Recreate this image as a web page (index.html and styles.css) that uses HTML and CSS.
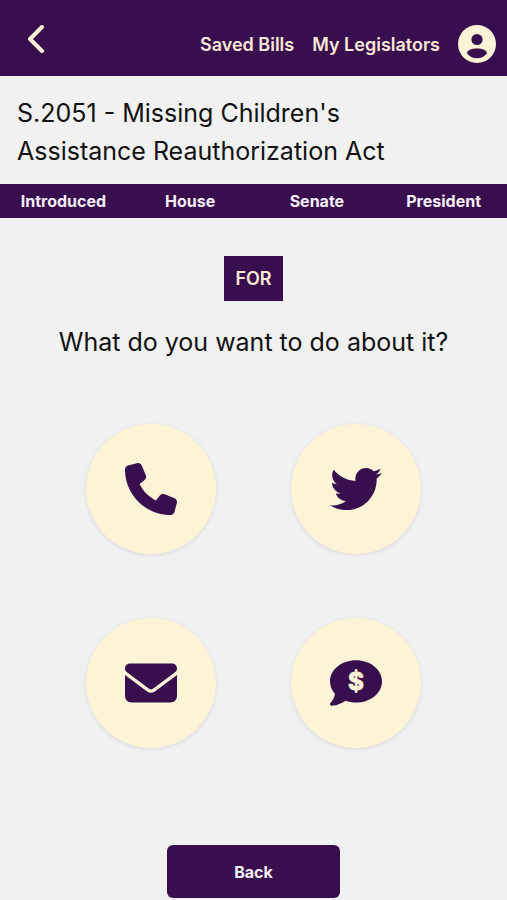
FILE: index.html
```
<!DOCTYPE html>
<html lang="en">
<head>
    <meta charset="UTF-8">
    <meta name="viewport" content="width=device-width, initial-scale=1.0">
    <title>S.2051 - Take action</title>
    <link rel="stylesheet" href="styles.css">
</head>
<body>
    <header class="topbar">
        <a class="back-link" href="#" aria-label="Go back">
            <svg width="18" height="28" viewBox="0 0 18 28"><path d="M15 2L3 14l12 12"/></svg>
        </a>
        <nav class="topnav">
            <a href="#">Saved Bills</a>
            <a href="#">My Legislators</a>
            <a class="account" href="#" aria-label="Account">
                <svg width="38" height="38" viewBox="0 0 38 38">
                    <circle class="cream" cx="19" cy="19" r="19"/>
                    <circle class="purple" cx="19" cy="14.5" r="5.6"/>
                    <path class="purple" d="M9 28.2C9 25.500 13.500 23.500 19 23.500s10 2 10 4.700C27 31.300 23.200 33.200 19 33.200S11 31.300 9 28.200z"/>
                </svg>
            </a>
        </nav>
    </header>

    <h1 class="bill-title">S.2051 - Missing Children's Assistance Reauthorization Act</h1>

    <ol class="progress">
        <li>Introduced</li>
        <li>House</li>
        <li>Senate</li>
        <li>President</li>
    </ol>

    <main>
        <p class="stance">FOR</p>
        <h2>What do you want to do about it?</h2>

        <div class="actions">
            <button type="button" aria-label="Call">
                <svg viewBox="0 0 512 512"><path d="M164.9 24.6c-7.7-18.6-28-28.5-47.4-23.2l-88 24C12.1 30.2 0 46 0 64C0 311.4 200.6 512 448 512c18 0 33.8-12.1 38.6-29.5l24-88c5.3-19.4-4.6-39.7-23.2-47.4l-96-40c-16.3-6.8-35.2-2.1-46.3 11.6L304.7 368C234.3 334.7 177.3 277.7 144 207.3L193.3 167c13.7-11.2 18.4-30 11.6-46.3l-40-96z"/></svg>
            </button>
            <button type="button" aria-label="Tweet">
                <svg viewBox="0 0 512 512"><path d="M459.37 151.716c.325 4.548.325 9.097.325 13.645 0 138.72-105.583 298.558-298.558 298.558-59.452 0-114.68-17.219-161.137-47.106 8.447.974 16.568 1.299 25.34 1.299 49.055 0 94.213-16.568 130.274-44.832-46.132-.975-84.792-31.188-98.112-72.772 6.498.974 12.995 1.624 19.818 1.624 9.421 0 18.843-1.3 27.614-3.573-48.081-9.747-84.143-51.98-84.143-102.985v-1.299c13.969 7.797 30.214 12.67 47.431 13.319-28.264-18.843-46.781-51.005-46.781-87.391 0-19.492 5.197-37.36 14.294-52.954 51.655 63.675 129.3 105.258 216.365 109.807-1.624-7.797-2.599-15.918-2.599-24.04 0-57.828 46.782-104.934 104.934-104.934 30.213 0 57.502 12.67 76.67 33.137 23.715-4.548 46.456-13.32 66.599-25.34-7.798 24.366-24.366 44.833-46.132 57.827 21.117-2.273 41.584-8.122 60.426-16.243-14.292 20.791-32.161 39.308-52.628 54.253z"/></svg>
            </button>
            <button type="button" aria-label="Email">
                <svg viewBox="0 0 512 512"><path d="M48 64C21.5 64 0 85.5 0 112c0 15.1 7.1 29.3 19.2 38.4L236.8 313.6c11.4 8.5 27 8.5 38.4 0L492.8 150.4c12.1-9.1 19.2-23.3 19.2-38.4c0-26.5-21.5-48-48-48H48zM0 176V384c0 35.3 28.7 64 64 64H448c35.3 0 64-28.7 64-64V176L294.4 339.2c-22.8 17.1-54 17.1-76.8 0L0 176z"/></svg>
            </button>
            <button type="button" aria-label="Donate">
                <svg viewBox="0 0 512 512">
                    <path d="M512 240c0 114.9-114.6 208-256 208c-37.1 0-72.3-6.4-104.1-17.9c-11.9 8.7-31.3 20.6-54.3 30.6C73.6 471.1 44.7 480 16 480c-6.5 0-12.3-3.9-14.8-9.9c-2.5-6-1.1-12.8 3.4-17.4c.6-.6 8.1-8.7 21.7-28.7c10-16.6 19.5-38.4 21.4-62.9C17.7 326.8 0 285.1 0 240C0 125.1 114.6 32 256 32s256 93.1 256 208z"/>
                    <text class="dollar" x="256" y="326" text-anchor="middle">$</text>
                </svg>
            </button>
        </div>

        <button class="back-button" type="button">Back</button>
    </main>
</body>
</html>
```

FILE: styles.css
```
* {
    box-sizing: border-box;
}

body {
    display: flex;
    flex-direction: column;
    min-height: 100vh;
    margin: 0;
    background-color: #f1f1f1;
    color: #111;
    font-family: Inter, "Liberation Sans", sans-serif;
}

button {
    border: none;
    font-family: inherit;
    cursor: pointer;
}

.topbar {
    display: flex;
    justify-content: space-between;
    align-items: flex-start;
    padding: 25px 11px 13px 27px;
    background-color: #390e4f;
}

.back-link svg {
    display: block;
    fill: none;
    stroke: #fef3d7;
    stroke-width: 4;
    stroke-linecap: round;
    stroke-linejoin: round;
}

.topnav {
    display: flex;
    align-items: center;
    gap: 18px;
}

.topnav a {
    color: #fbe9d6;
    font-size: 18px;
    font-weight: 600;
    text-decoration: none;
}

.account svg {
    display: block;
}

.cream {
    fill: #fef3d7;
}

.purple {
    fill: #390e4f;
}

.bill-title {
    margin: 0;
    padding: 18px 100px 14px 17px;
    font-size: 25px;
    line-height: 38px;
    font-weight: 400;
}

.progress {
    display: grid;
    grid-template-columns: repeat(4, 1fr);
    margin: 0;
    padding: 0;
    list-style: none;
    background-color: #390e4f;
    color: #f7effa;
    font-size: 16px;
    font-weight: 700;
    line-height: 34px;
    text-align: center;
}

main {
    display: flex;
    flex: 1;
    flex-direction: column;
    align-items: center;
    padding: 38px 16px 2px;
}

.stance {
    margin: 0;
    padding: 0 11px;
    background-color: #390e4f;
    color: #fbe9d6;
    font-size: 18px;
    font-weight: 600;
    line-height: 45px;
}

h2 {
    margin: 25px 0 66px;
    font-size: 25px;
    font-weight: 400;
    line-height: 32px;
    text-align: center;
}

.actions {
    display: grid;
    grid-template-columns: 130px 130px;
    gap: 64px 75px;
    margin-bottom: 32px;
}

.actions button {
    display: flex;
    align-items: center;
    justify-content: center;
    height: 130px;
    padding: 0;
    border-radius: 50%;
    background-color: #fdf4d7;
    box-shadow: 0 1px 4px rgba(0, 0, 0, 0.1);
}

.actions svg {
    width: 52px;
    height: 52px;
    fill: #390e4f;
}

.dollar {
    fill: #fdf4d7;
    stroke: #fdf4d7;
    stroke-width: 10;
    stroke-linejoin: round;
    font-size: 240px;
    font-weight: 700;
}

.back-button {
    width: 173px;
    height: 53px;
    margin-top: auto;
    border-radius: 6px;
    background-color: #390e4f;
    color: #f7effa;
    font-size: 16px;
    font-weight: 700;
}
```
